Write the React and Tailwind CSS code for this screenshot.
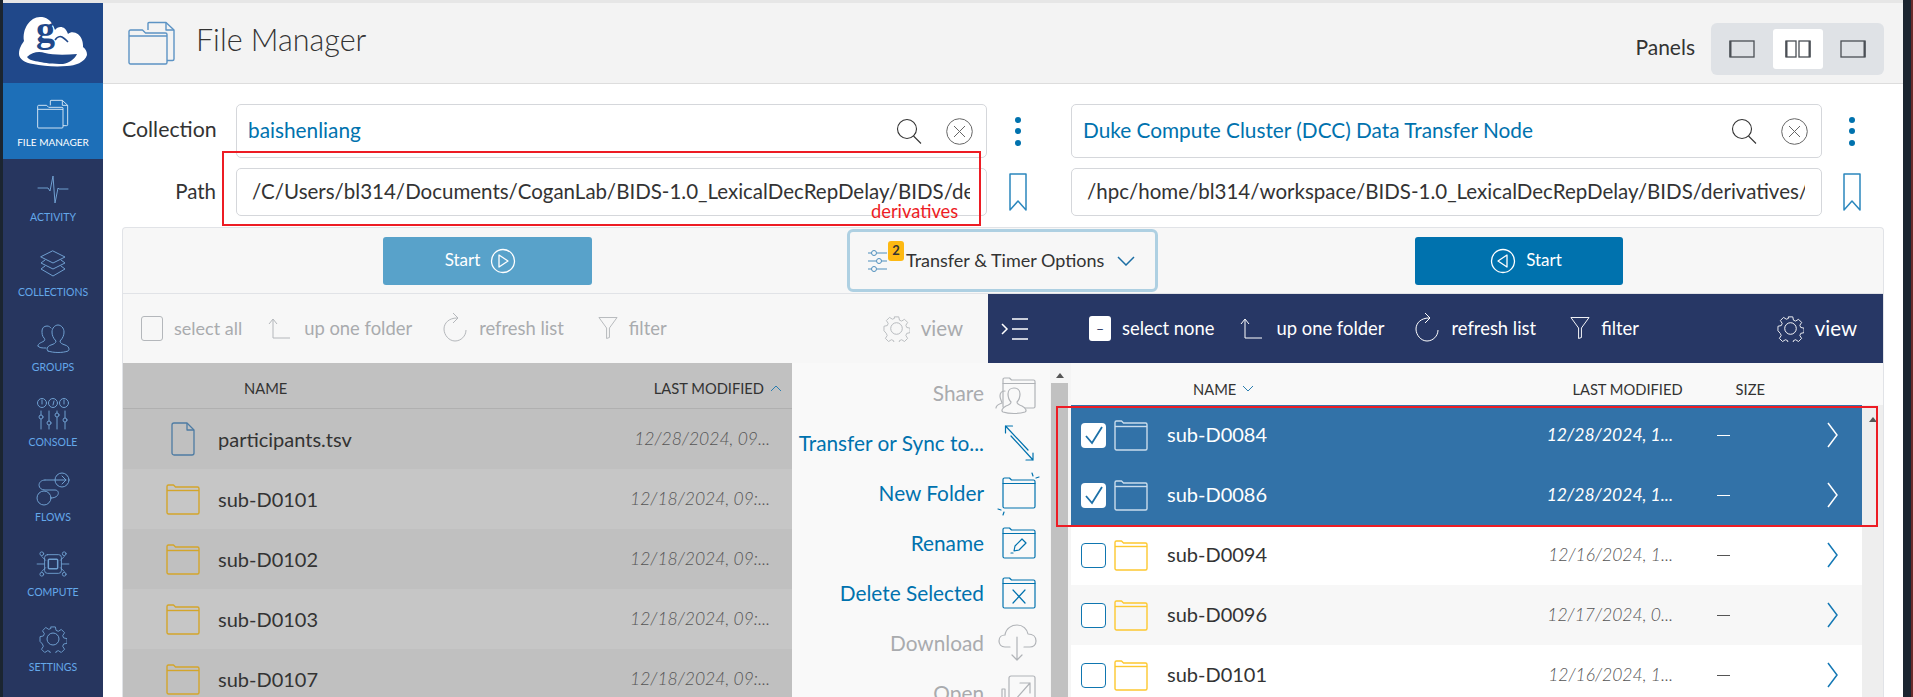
import React from "react";

const Svg = ({ w, h, vb, className = "", children }) => (
  <svg width={w} height={h} viewBox={vb || `0 0 ${w} ${h}`} fill="none" stroke="currentColor" strokeWidth="1" strokeLinecap="round" strokeLinejoin="round" className={`shrink-0 ${className}`}>
    {children}
  </svg>
);

const Logo = () => (
  <svg width="68" height="50" viewBox="0 0 68 50" className="shrink-0">
    <path d="M0 37C0 31 3 27 5 24 3 12 11 0 21 0 27 0 32 2 36 13 39 9 46 8 49 17 53 13 61 16 63 23 64 26 64 28 64 30 67 32 68 35 68 38 66 45 56 49 48 49 36 50 24 49 14 47 6 46 0 42 0 37Z" fill="#fff" />
    <path d="M8 40C13 35 20 34 26 36 33 38 46 38 58 37 56 42 50 46 44 47 34 47 25 46 21 45 15 44 10 43 8 40Z" fill="#20488a" />
    <text x="17" y="25" fontFamily="'Liberation Serif', serif" fontWeight="700" fontSize="38" fill="#20488a">g</text>
    <path d="M36 23C38 20 41 19 43 20 45 21 47 23 49 25" stroke="#20488a" strokeWidth="1.600" fill="none" />
  </svg>
);

const FilesIcon = ({ w = 48, h = 44, color = "#5c93c4" }) => (
  <svg width={w} height={h} viewBox="0 0 48 44" fill="none" stroke={color} strokeWidth="1.400" strokeLinejoin="round" className="shrink-0">
    <path d="M20 9V2.500a1 1 0 0 1 1-1h17l8 7.500v29a1.500 1.500 0 0 1-1.500 1.500H39" />
    <path d="M38 1.500V9h8" />
    <path d="M1 10.500a1.500 1.500 0 0 1 1.500-1.500h12l3 3H37.500A1.500 1.500 0 0 1 39 13.500v28a1.500 1.500 0 0 1-1.500 1.500h-35A1.500 1.500 0 0 1 1 41.500z" />
    <path d="M1 15h38" />
  </svg>
);

const NAV_ICONS = {
  activity: (
    <Svg w={32} h={32}>
      <path d="M1 15h10l2 3 3-15 2 27 3-15 1 1h9" />
    </Svg>
  ),
  layers: (
    <Svg w={28} h={28}>
      <path d="M14 1 26 7 14 13 2 7z" />
      <path d="M6 10 2 13l12 6 12-6-4-3" />
      <path d="M6 16l-4 3 12 7 12-7-4-3" />
    </Svg>
  ),
  groups: (
    <Svg w={34} h={30}>
      <path d="M2 22c0-3 3-3 6-5 1-1 1-2 0-3-2-2-2-5-2-7 0-3 2-5 5-5 2 0 3 1 4 2" />
      <path d="M12 27c-2-1-1-5 3-6 3-1 5-2 5-4-3-3-4-6-4-9 0-4 3-7 6-7s6 3 6 7c0 3-1 6-4 9 0 2 2 3 5 4 4 1 5 5 3 6-5 2-15 2-20 0z" />
      <path d="M2 22c1 2 4 2 8 2" />
    </Svg>
  ),
  console: (
    <Svg w={32} h={32}>
      <circle cx="5" cy="5" r="4.500" />
      <circle cx="16" cy="5" r="4.500" />
      <circle cx="27" cy="5" r="4.500" />
      <path d="M5 2v4M16 7l1-4M27 2v4" />
      <path d="M4 13v18M12 13v18M20 13v18M28 13v18" />
      <circle cx="4" cy="19" r="2" fill="#27365f" />
      <circle cx="12" cy="25" r="2" fill="#27365f" />
      <circle cx="20" cy="17" r="2" fill="#27365f" />
      <circle cx="28" cy="22" r="2" fill="#27365f" />
    </Svg>
  ),
  flows: (
    <Svg w={34} h={34}>
      <circle cx="26" cy="8" r="7" />
      <circle cx="8" cy="26" r="7" />
      <path d="M9 8h21m-4-4 4 4-4 4" />
      <path d="M9 8c-8 0-8 10 0 10h10c5 0 5 8-4 8" />
    </Svg>
  ),
  compute: (
    <Svg w={36} h={28} vb="0 0 36 30">
      <rect x="9" y="5" width="18" height="20" rx="3" />
      <rect x="13" y="10" width="10" height="10" rx="1" strokeWidth="1.600" />
      <path d="M1 15h8M27 15h8M6 7l4 4M30 7l-4 4M6 23l4-4M30 23l-4-4" />
      <circle cx="6" cy="4" r="2" />
      <circle cx="30" cy="4" r="2" />
      <circle cx="6" cy="26" r="2" />
      <circle cx="30" cy="26" r="2" />
    </Svg>
  ),
};

const Gear = ({ size = 27 }) => (
  <svg width={size} height={size} viewBox="0 0 28 28" fill="none" stroke="currentColor" strokeWidth="1" strokeLinejoin="round" className="shrink-0">
    <path d="M11.500 1h5l.8 3.700 2.400 1 3.200-2 3.500 3.500-2 3.200 1 2.400 3.700.8v5l-3.700.8-1 2.400 2 3.200-3.500 3.500-3.200-2-2.400 1-.8 3.700h-5l-.8-3.700-2.400-1-3.200 2-3.500-3.500 2-3.200-1-2.400L0 16.500v-5l3.700-.8 1-2.400-2-3.200 3.500-3.500 3.200 2 2.400-1z" transform="translate(1 1) scale(.93)" />
    <circle cx="14" cy="14" r="6" />
  </svg>
);

const NAV = [
  ["ACTIVITY", NAV_ICONS.activity],
  ["COLLECTIONS", NAV_ICONS.layers],
  ["GROUPS", NAV_ICONS.groups],
  ["CONSOLE", NAV_ICONS.console],
  ["FLOWS", NAV_ICONS.flows],
  ["COMPUTE", NAV_ICONS.compute],
  ["SETTINGS", <Gear size={28} />],
];

const Sidebar = () => (
  <div className="w-[100px] shrink-0 bg-[#27365f] flex flex-col">
    <div className="h-[80px] bg-[#20488a] flex items-center justify-center pb-[2px]">
      <Logo />
    </div>
    <div className="h-[76px] bg-[#1d6fb8] flex flex-col items-center text-white pt-[16px]">
      <FilesIcon w={32} h={30} color="#dbe9f5" />
      <span className="mt-[6px] text-[10px] leading-[14px]">FILE MANAGER</span>
    </div>
    {NAV.map(([label, icon]) => (
      <div key={label} className="h-[75px] flex flex-col items-center justify-end pb-[10px] text-[#6f9fd0]">
        <div className="h-[38px] flex items-center justify-center">{icon}</div>
        <span className="mt-[2px] text-[10.500px] leading-[14px] text-[#64a8ea]">{label}</span>
      </div>
    ))}
  </div>
);

const PanelBtn = ({ active, kind }) => (
  <div className={`w-[50px] h-[40px] rounded-[3px] flex items-center justify-center ${active ? "bg-white" : ""}`}>
    <svg width="26" height="18" viewBox="0 0 26 18" fill="none" stroke="#4a4f55" strokeWidth="1.300" className="shrink-0">
      {kind === "mid" ? (
        <>
          <rect x="1" y="1" width="10" height="16" />
          <rect x="14" y="1" width="11" height="16" />
          <path d="M1.500 1v16M24.500 1v16" strokeWidth="2" />
        </>
      ) : (
        <>
          <rect x="1" y="1" width="24" height="16" />
          <path d={kind === "left" ? "M1.500 1v16" : "M24.500 1v16"} strokeWidth="2" />
        </>
      )}
    </svg>
  </div>
);

const Header = () => (
  <div className="h-[81px] shrink-0 bg-[#f3f3f3] border-b border-[#dddddd] flex items-center pl-[25px] pr-[19px]">
    <FilesIcon />
    <span className="ml-[20px] text-[30.500px] font-light text-[#333] leading-none mb-[8px]">File Manager</span>
    <span className="ml-auto mr-[16px] text-[21px] text-[#333] mt-[7px]">Panels</span>
    <div className="w-[173px] h-[52px] rounded-[6px] bg-[#dfe2e6] flex items-center justify-between px-[6px] mt-[11px]">
      <PanelBtn kind="left" />
      <PanelBtn kind="mid" active />
      <PanelBtn kind="right" />
    </div>
  </div>
);

const Search = () => (
  <svg width="26" height="26" viewBox="0 0 26 26" fill="none" stroke="#333" strokeWidth="1.100" className="shrink-0">
    <circle cx="11" cy="11" r="9.500" />
    <path d="M17.500 18 25 25.500" />
  </svg>
);

const ClearCircle = () => (
  <svg width="27" height="27" viewBox="0 0 27 27" fill="none" stroke="#666" strokeWidth="1" className="shrink-0">
    <circle cx="13.500" cy="13.500" r="12.800" />
    <path d="M8 8l11 11M19 8 8 19" />
  </svg>
);

const Kebab = () => (
  <div className="w-[6px] flex flex-col gap-[5.500px]">
    <span className="w-[6px] h-[6px] rounded-full bg-[#0072ae]" />
    <span className="w-[6px] h-[6px] rounded-full bg-[#0072ae]" />
    <span className="w-[6px] h-[6px] rounded-full bg-[#0072ae]" />
  </div>
);

const Bookmark = () => (
  <svg width="18" height="38" viewBox="0 0 18 38" fill="none" stroke="#2b87bd" strokeWidth="1.500" strokeLinejoin="round" className="shrink-0">
    <path d="M1 1h16v36l-8-9-8 9z" />
  </svg>
);

const CollectionBox = ({ text }) => (
  <div className="h-[54px] border border-[#d5d7db] rounded-[5px] bg-white flex items-center pl-[11px] pr-[13px]">
    <span className="text-[20.800px] text-[#0072ae] truncate mb-[2px]">{text}</span>
    <div className="ml-auto flex items-center gap-[24px]">
      <Search />
      <ClearCircle />
    </div>
  </div>
);

const PathBox = ({ text }) => (
  <div className="h-[48px] border border-[#d5d7db] rounded-[5px] bg-white flex items-center pl-[15px] pr-[16px]">
    <span className="text-[20.500px] text-[#333] whitespace-nowrap overflow-hidden mb-[1px]">{text}</span>
  </div>
);

const PlayIcon = ({ back }) => (
  <svg width="26" height="26" viewBox="0 0 26 26" fill="none" stroke="#fff" strokeWidth="1.300" strokeLinejoin="round" className="shrink-0">
    <circle cx="13" cy="13" r="11.500" />
    <path d={back ? "M17 7v12L8 13z" : "M9 7v12l9-6z"} />
  </svg>
);

const Sliders = () => (
  <svg width="19" height="22" viewBox="0 0 19 22" fill="none" stroke="#4f8fbd" strokeWidth="1" className="shrink-0">
    <path d="M0 3h3.500M9 3h10M0 11h8M13.500 11H19M0 19h3.500M9 19h10" />
    <circle cx="6" cy="3" r="2.500" />
    <circle cx="11" cy="11" r="2.500" />
    <circle cx="6" cy="19" r="2.500" />
  </svg>
);

const UpArrow = ({ color }) => (
  <svg width="23" height="22" viewBox="0 0 23 22" fill="none" stroke={color} strokeWidth="1" className="shrink-0">
    <path d="M5 3v18h17M1 7l4-5 4 5" />
  </svg>
);

const Refresh = ({ color }) => (
  <svg width="24" height="30" viewBox="0 0 24 30" fill="none" stroke={color} strokeWidth="1" className="shrink-0 mb-[3px]">
    <path d="M14 6C6 6 1 11 1 17s5 12 11 12 11-5 11-11" />
    <path d="M10 1l5 5-5 5" />
  </svg>
);

const Funnel = ({ color }) => (
  <svg width="20" height="24" viewBox="0 0 21 24" fill="none" stroke={color} strokeWidth="1" strokeLinejoin="round" className="shrink-0">
    <path d="M1 1h19l-8 11v10l-3 1V12z" />
  </svg>
);

const Tools = ({ dark }) => {
  const c = dark ? "#fff" : "#b4b7bb";
  const t = dark ? "text-white" : "text-[#a9abae]";
  return (
    <>
      <div className="flex items-center">
        <UpArrow color={c} />
        <span className={`ml-[13px] text-[18.400px] ${t}`}>up one folder</span>
      </div>
      <div className="ml-[31px] flex items-center">
        <Refresh color={c} />
        <span className={`ml-[12px] text-[18.400px] ${t}`}>refresh list</span>
      </div>
      <div className="ml-[34px] flex items-center">
        <Funnel color={c} />
        <span className={`ml-[11px] text-[18.400px] ${t}`}>filter</span>
      </div>
    </>
  );
};

const FolderIcon = ({ color }) => (
  <svg width="34" height="31" viewBox="0 0 34 31" fill="none" stroke={color} strokeWidth="1.400" strokeLinejoin="round" className="shrink-0">
    <path d="M1 2.500A1.500 1.500 0 0 1 2.500 1h5l2 2h22A1.500 1.500 0 0 1 33 4.500v24a1.500 1.500 0 0 1-1.500 1.500h-29A1.500 1.500 0 0 1 1 28.500z" />
    <path d="M1 6.500h32" />
  </svg>
);

const FileIcon = () => (
  <svg width="24" height="34" viewBox="0 0 24 34" fill="none" stroke="#4d7ba3" strokeWidth="1.300" strokeLinejoin="round" className="shrink-0">
    <path d="M3 1h13l7 7v23a2 2 0 0 1-2 2H3a2 2 0 0 1-2-2V3a2 2 0 0 1 2-2z" />
    <path d="M16 1v7h7" />
  </svg>
);

const LEFT_ROWS = [
  ["participants.tsv", "12/28/2024, 09...", true],
  ["sub-D0101", "12/18/2024, 09:..."],
  ["sub-D0102", "12/18/2024, 09:..."],
  ["sub-D0103", "12/18/2024, 09:..."],
  ["sub-D0107", "12/18/2024, 09:..."],
];

const RIGHT_ROWS = [
  ["sub-D0084", "12/28/2024, 1...", true],
  ["sub-D0086", "12/28/2024, 1...", true],
  ["sub-D0094", "12/16/2024, 1..."],
  ["sub-D0096", "12/17/2024, 0..."],
  ["sub-D0101", "12/16/2024, 1..."],
];

const LeftTable = () => (
  <div className="w-[669px] shrink-0 h-full overflow-hidden">
    <div className="h-[46px] bg-[#c1c1c1] border-b border-[#b0b0b0] flex items-center pt-[5px] text-[14.700px] text-[#333]">
      <span className="ml-[121px]">NAME</span>
      <span className="ml-auto">LAST MODIFIED</span>
      <svg width="12" height="8" viewBox="0 0 12 8" fill="none" stroke="#2b7eb0" strokeWidth="1" className="ml-[6px] mr-[10px] shrink-0">
        <path d="M1 7l5-5 5 5" />
      </svg>
    </div>
    {LEFT_ROWS.map(([name, date, isFile], i) => (
      <div key={name} className={`h-[60px] flex items-center ${i % 2 ? "bg-[#c6c6c6]" : "bg-[#c0c0c0]"}`}>
        <div className="w-[77px] flex justify-end shrink-0">
          <div className={`w-[34px] flex ${isFile ? "justify-center" : ""}`}>
            {isFile ? <FileIcon /> : <FolderIcon color="#d3a52b" />}
          </div>
        </div>
        <span className="ml-[18px] text-[20px] text-[#333] whitespace-nowrap mb-[1px]">{name}</span>
        <span className="ml-auto pr-[22px] text-[17.500px] italic font-light text-[#555] whitespace-nowrap">{date}</span>
      </div>
    ))}
  </div>
);

const ActionIcon = ({ name, color }) => {
  const folder = (
    <>
      <path d="M1 4.500A1.500 1.500 0 0 1 2.500 3h5l2 2h22A1.500 1.500 0 0 1 33 6.500v25a1.500 1.500 0 0 1-1.500 1.500h-29A1.500 1.500 0 0 1 1 31.500z" />
      <path d="M1 8.500h32" />
    </>
  );
  return (
    <svg width="42" height="42" viewBox="-4 -3 42 42" fill="none" stroke={color} strokeWidth="1.200" strokeLinejoin="round" strokeLinecap="round" className="shrink-0 overflow-visible">
      {name === "share" && (
        <>
          {folder}
          <path d="M-6 33c0-3 3-4 6-5 0-2-2-3-2-7 0-3 2-5 5-5" />
          <path d="M1 37c-2-1-1-4 3-6 3-1 5-2 5-4-2-2-3-5-3-8 0-4 3-6 6-6s6 2 6 6c0 3-1 6-3 8 0 2 2 3 5 4 4 2 5 5 3 6-6 2-16 2-22 0z" fill="#f9f9f9" />
        </>
      )}
      {name === "sync" && (
        <>
          <path d="M26 25 3.500 1M3.500 1v7M3.500 1h7" />
          <path d="M9 11l22 24M31 35v-7M31 35h-7" />
        </>
      )}
      {name === "new" && (
        <>
          {folder}
          <path d="M31 1l-1-3M34 3l3-1M-1 35l-3-1M2 37l-1 3" />
        </>
      )}
      {name === "rename" && (
        <>
          {folder}
          <path d="M12 26l1-5 7-7 4 4-7 7zM9 28h2" />
        </>
      )}
      {name === "delete" && (
        <>
          {folder}
          <path d="M11 15l12 13M23 15 11 28" />
        </>
      )}
      {name === "download" && (
        <path d="M8 22H3c-4 0-6-3-6-6 0-4 3-6 6-6 1-7 7-10 12-10 6 0 10 4 11 9 5 0 8 3 8 7s-3 6-6 6H22M15 12v22m-5-4 5 5 5-5" />
      )}
      {name === "open" && (
        <>
          <path d="M3 14H0v24h20v-8H3z" />
          <path d="M7 3a2 2 0 0 1 2-2h22a2 2 0 0 1 2 2v27H7zM13 25 28 8M18 8h10v10" />
        </>
      )}
    </svg>
  );
};

const ACTIONS = [
  ["Share", "share", false],
  ["Transfer or Sync to...", "sync", true],
  ["New Folder", "new", true],
  ["Rename", "rename", true],
  ["Delete Selected", "delete", true],
  ["Download", "download", false],
  ["Open", "open", false],
];

const Actions = () => (
  <div className="w-[258px] shrink-0 h-full bg-[#f9f9f9] overflow-hidden flex flex-col items-end pt-[5px] pr-[10px]">
    {ACTIONS.map(([label, icon, on]) => {
      const color = on ? "#0072ae" : "#b0b3b7";
      return (
        <div key={label} className="h-[50px] flex items-center shrink-0">
          <span className={`text-[20.800px] whitespace-nowrap ${on ? "text-[#0072ae]" : "text-[#a9abae]"}`}>{label}</span>
          <span className="ml-[14px]"><ActionIcon name={icon} color={color} /></span>
        </div>
      );
    })}
  </div>
);

const ScrollBar = ({ wide }) => (
  <div className={`h-full shrink-0 flex flex-col ${wide ? "w-[21px] bg-[#eeeeee] items-center" : "w-[21px] bg-[#f5f5f5] pl-[1px]"}`}>
    <span className={`${wide ? "mt-[12px]" : "mt-[10px] ml-[5px]"} w-0 h-0 border-l-[4px] border-r-[4px] border-b-[5px] border-l-transparent border-r-transparent border-b-[#555]`} />
    {!wide && <span className="mt-[5px] w-[17px] flex-1 bg-[#c1c1c1]" />}
  </div>
);

const CheckBox = ({ checked }) =>
  checked ? (
    <span className="w-[25px] h-[25px] rounded-[4px] bg-white flex items-center justify-center shrink-0">
      <svg width="20" height="20" viewBox="0 0 20 20" fill="none" stroke="#1c70a8" strokeWidth="1.800" className="shrink-0">
        <path d="M2 11l6 7L18 2" />
      </svg>
    </span>
  ) : (
    <span className="w-[25px] h-[25px] rounded-[4px] bg-white border border-[#0f76b0] shrink-0" />
  );

const RightTable = () => (
  <div className="flex-1 min-w-0 h-full overflow-hidden flex flex-col bg-white">
    <div className="h-[42px] shrink-0 bg-[#f9f9f9] flex items-center pt-[10px] text-[14.700px] text-[#333]">
      <span className="ml-[122px]">NAME</span>
      <svg width="12" height="8" viewBox="0 0 12 8" fill="none" stroke="#2b7eb0" strokeWidth="1" className="ml-[6px] shrink-0">
        <path d="M1 1l5 5 5-5" />
      </svg>
      <span className="ml-auto">LAST MODIFIED</span>
      <span className="ml-[53px] mr-[118px]">SIZE</span>
    </div>
    <div className="flex flex-1 min-h-0">
      <div className="flex-1 min-w-0">
        {RIGHT_ROWS.map(([name, date, sel], i) => (
          <div key={name} className={`h-[60px] flex items-center pl-[10px] ${sel ? "bg-[#3272a8]" : i % 2 ? "bg-[#f7f7f7]" : "bg-white"}`}>
            <CheckBox checked={sel} />
            <span className="ml-[8px]"><FolderIcon color={sel ? "#c9dcec" : "#fdc830"} /></span>
            <span className={`ml-[19px] text-[20px] whitespace-nowrap mb-[2px] ${sel ? "text-white" : "text-[#333]"}`}>{name}</span>
            <span className={`ml-auto text-[17.500px] italic whitespace-nowrap ${sel ? "text-white" : "font-light text-[#555]"}`}>{date}</span>
            <span className={`ml-[44px] w-[13px] h-[1px] shrink-0 ${sel ? "bg-white" : "bg-[#555]"}`} />
            <svg width="11" height="26" viewBox="0 0 11 26" fill="none" stroke={sel ? "#fff" : "#1478b4"} strokeWidth="1.500" className="ml-[97px] mr-[24px] shrink-0">
              <path d="M1 1l9 12-9 12" />
            </svg>
          </div>
        ))}
      </div>
      <ScrollBar wide />
    </div>
  </div>
);

const Main = () => (
  <div className="flex-1 min-w-0 flex flex-col bg-white">
    <Header />
    <div className="flex-1 min-h-0 pl-[19px] pr-[19px] pt-[20px] flex flex-col">
      <div className="flex items-center">
        <span className="w-[94px] text-right text-[21.300px] text-[#333] shrink-0 mb-[3px]">Collection</span>
        <div className="ml-[20px] w-[751px] shrink-0"><CollectionBox text="baishenliang" /></div>
        <div className="w-[84px] flex pl-[28px]"><Kebab /></div>
        <div className="w-[751px] shrink-0"><CollectionBox text="Duke Compute Cluster (DCC) Data Transfer Node" /></div>
        <div className="flex-1 flex pl-[27px]"><Kebab /></div>
      </div>
      <div className="flex items-center mt-[10px]">
        <span className="w-[94px] text-right text-[20.500px] text-[#333] shrink-0 mb-[2px]">Path</span>
        <div className="ml-[20px] w-[751px] shrink-0"><PathBox text="/C/Users/bl314/Documents/CoganLab/BIDS-1.0_LexicalDecRepDelay/BIDS/derivatives" /></div>
        <div className="w-[84px] flex pl-[22px]"><Bookmark /></div>
        <div className="w-[751px] shrink-0"><PathBox text="/hpc/home/bl314/workspace/BIDS-1.0_LexicalDecRepDelay/BIDS/derivatives/d" /></div>
        <div className="flex-1 flex pl-[21px]"><Bookmark /></div>
      </div>

      <div className="mt-[11px] flex-1 min-h-0 border-t border-l border-r border-[#e1e3e7] rounded-t-[4px] bg-[#f7f7f7] flex flex-col overflow-hidden">
        <div className="h-[66px] shrink-0 border-b border-[#e1e3e7] flex items-center">
          <div className="ml-[260px] w-[209px] h-[48px] rounded-[3px] bg-[#58a2ca] text-white flex items-center justify-center gap-[10px] text-[17px] pr-[14px]">
            <span className="mb-[2px]">Start</span>
            <PlayIcon />
          </div>
          <div className="ml-[255px] w-[311px] h-[63px] rounded-[6px] border-[3px] border-[#aed0e2] bg-[#f7f7f7] flex items-center pl-[18px] relative">
            <Sliders />
            <span className="absolute left-[38px] top-[9px] w-[16px] h-[20px] rounded-[3px] bg-[#fdb913] text-[13px] font-bold text-[#333] flex items-center justify-center">2</span>
            <span className="ml-[19px] text-[18px] text-[#333] whitespace-nowrap mb-[1px]">Transfer &amp; Timer Options</span>
            <svg width="18" height="10" viewBox="0 0 18 10" fill="none" stroke="#1c6ea4" strokeWidth="1.500" className="ml-[13px] shrink-0">
              <path d="M1 1l8 8 8-8" />
            </svg>
          </div>
          <div className="ml-[257px] w-[208px] h-[48px] rounded-[3px] bg-[#0072ae] text-white flex items-center justify-center gap-[10px] text-[17px] pl-[14px]">
            <PlayIcon back />
            <span className="mb-[2px]">Start</span>
          </div>
        </div>

        <div className="h-[69px] shrink-0 flex">
          <div className="w-[865px] shrink-0 flex items-center pl-[18px] pr-[25px]">
            <span className="w-[22px] h-[25px] rounded-[3px] border border-[#b4b7bb] shrink-0" />
            <span className="ml-[11px] text-[18px] text-[#a9abae]">select all</span>
            <span className="ml-[26px] flex items-center"><Tools /></span>
            <span className="ml-auto text-[#b4b7bb]"><Gear /></span>
            <span className="ml-[11px] text-[20.500px] text-[#a9abae]">view</span>
          </div>
          <div className="flex-1 min-w-0 bg-[#273765] flex items-center pl-[13px] pr-[26px] text-white">
            <svg width="28" height="22" viewBox="0 0 28 22" fill="none" stroke="#fff" strokeWidth="1.500" className="shrink-0">
              <path d="M1 6l5 5-5 5M11 1h16M11 11h16M11 21h16" />
            </svg>
            <span className="ml-[60px] w-[22px] h-[25px] rounded-[3px] bg-white text-[#273765] flex items-center justify-center text-[14px] shrink-0">–</span>
            <span className="ml-[11px] text-[18.400px]">select none</span>
            <span className="ml-[26px] flex items-center"><Tools dark /></span>
            <span className="ml-auto"><Gear /></span>
            <span className="ml-[11px] text-[20.500px]">view</span>
          </div>
        </div>

        <div className="flex-1 min-h-0 flex">
          <LeftTable />
          <Actions />
          <ScrollBar />
          <RightTable />
        </div>
      </div>
    </div>
  </div>
);

export default function App() {
  return (
    <div className="relative w-full h-[697px] overflow-hidden bg-white font-['Lato',sans-serif] flex">
      <div className="w-[3px] shrink-0 bg-[#1b2530]" />
      <div className="flex-1 min-w-0 flex flex-col">
        <div className="h-[3px] shrink-0 bg-[#e6e6e6]" />
        <div className="flex-1 min-h-0 flex">
          <Sidebar />
          <Main />
        </div>
      </div>
      <div className="w-[10px] shrink-0 bg-[#1b2530] border-r-2 border-[#6b2a2a]" />

      {/* red annotations drawn over the page */}
      <div className="absolute left-[222px] top-[151px] w-[759px] h-[75px] border-2 border-[#ed1c24]">
        <span className="absolute left-[647px] top-[48px] text-[18.300px] leading-[20px] text-[#ed1c24]">derivatives</span>
      </div>
      <div className="absolute left-[1056px] top-[406px] w-[822px] h-[121px] border-2 border-[#ed1c24]" />
    </div>
  );
}
